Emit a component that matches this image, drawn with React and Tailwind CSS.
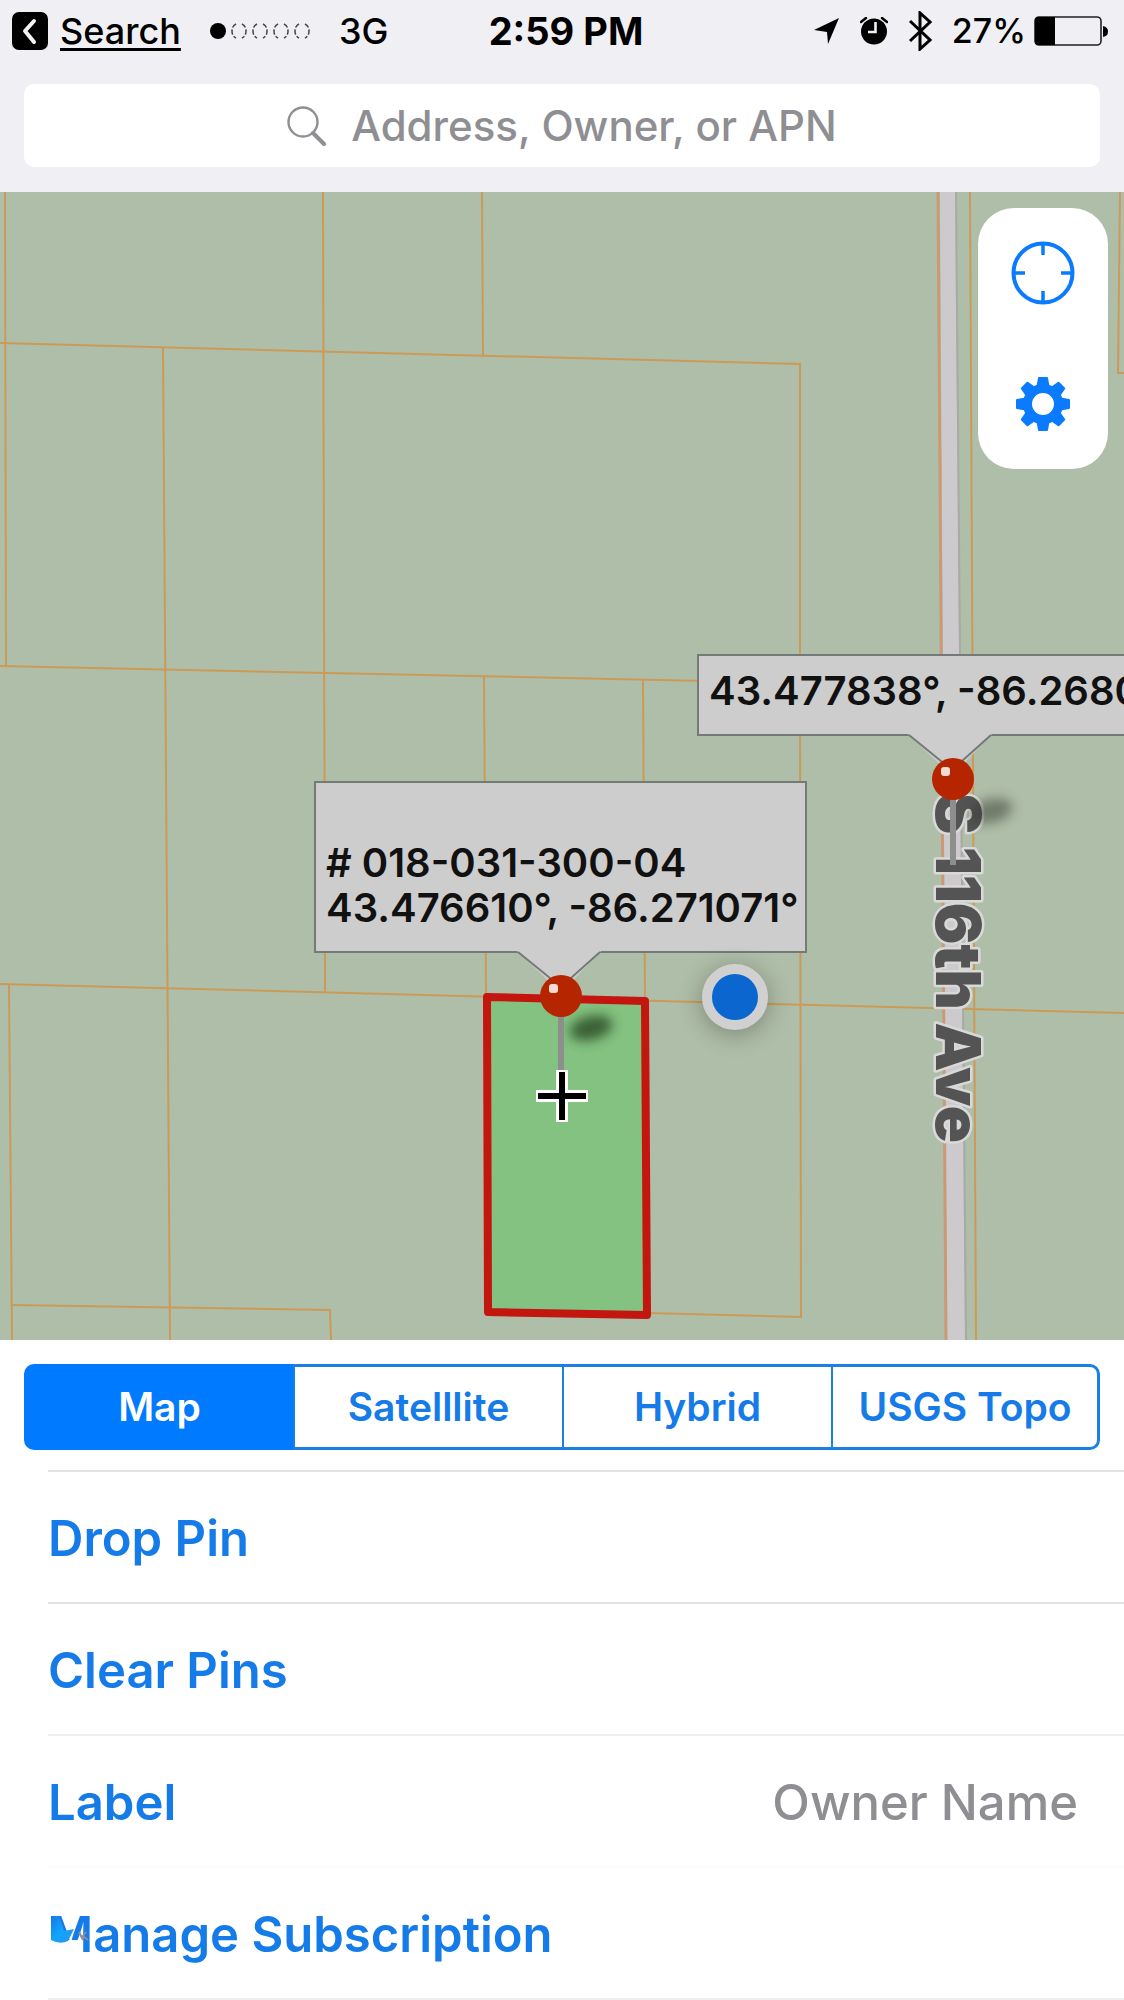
import { useState } from "react";

const INK = "#0a7aff";

function BackIcon() {
  return (
    <svg viewBox="0 0 36 38" className="h-[38px] w-9" aria-hidden="true">
      <rect width="36" height="38" rx="7" fill="#000" />
      <path d="M22 9 L13 19 L22 30" fill="none" stroke="#f4f4f7" strokeWidth="4" strokeLinecap="round" strokeLinejoin="round" />
    </svg>
  );
}

function SignalDots() {
  return (
    <svg viewBox="0 0 102 20" className="h-5 w-[102px]" role="img" aria-label="Signal: 1 of 5">
      <circle cx="9" cy="10" r="8" fill="#000" />
      {[30, 51, 72, 93].map((cx) => (
        <g key={cx} fill="none" stroke="#444" strokeWidth="1.5">
          <path d={`M${cx - 3} 3 Q${cx - 7} 5 ${cx - 7} 10 T${cx - 3} 17`} strokeDasharray="5 2" />
          <path d={`M${cx + 3} 3 Q${cx + 7} 5 ${cx + 7} 10 T${cx + 3} 17`} strokeDasharray="5 2" />
        </g>
      ))}
    </svg>
  );
}

function LocationIcon() {
  return (
    <svg viewBox="0 0 26 28" className="h-7 w-[26px]" aria-hidden="true">
      <path d="M25 1 L14 27 L13 15 L0 13 Z" fill="#000" />
    </svg>
  );
}

function AlarmIcon() {
  return (
    <svg viewBox="0 0 28 28" className="h-7 w-7" aria-hidden="true">
      <circle cx="14" cy="14.500" r="13" fill="#000" />
      <path d="M1 5 L6 1 M27 5 L22 1" stroke="#000" strokeWidth="2.4" strokeLinecap="round" />
      <path d="M15.500 5 V15 H8" fill="none" stroke="#efeff4" strokeWidth="2.6" />
    </svg>
  );
}

function BluetoothIcon() {
  return (
    <svg viewBox="0 0 24 40" className="h-10 w-6" aria-hidden="true">
      <path d="M2 10 L22 29 L12 38 V2 L22 11 L2 30" fill="none" stroke="#000" strokeWidth="3" />
    </svg>
  );
}

function BatteryIcon() {
  return (
    <svg viewBox="0 0 74 30" className="h-[30px] w-[74px]" aria-hidden="true">
      <rect x="1" y="1" width="66" height="28" rx="4" fill="none" stroke="#222" strokeWidth="1.6" />
      <path d="M4 1 H21 V29 H4 Q1 29 1 25 V5 Q1 1 4 1 Z" fill="#000" />
      <path d="M69 10 Q74 11 74 15.500 Q74 20 69 21 Z" fill="#000" />
    </svg>
  );
}

function StatusBar() {
  return (
    <div className="grid h-[62px] grid-cols-[1fr_auto_1fr] items-center pr-4 pl-3 text-[36px] leading-[44px] font-medium text-black">
      <div className="flex items-center">
        <a href="#search" className="flex items-center gap-3">
          <BackIcon />
          <span className="underline decoration-3 underline-offset-4 [text-decoration-skip-ink:none]">Search</span>
        </a>
        <span className="ml-7 flex"><SignalDots /></span>
        <span className="ml-7">3G</span>
      </div>
      <div className="pl-3 text-[38px] font-bold">2:59 PM</div>
      <div className="flex items-center justify-end gap-5">
        <LocationIcon />
        <AlarmIcon />
        <BluetoothIcon />
        <div className="flex items-center gap-2">
          <span className="text-[34px]">27%</span>
          <BatteryIcon />
        </div>
      </div>
    </div>
  );
}

function SearchBar() {
  return (
    <div className="px-6 pt-[22px] pb-[25px]">
      <label className="flex h-[83px] items-center justify-center gap-6 rounded-[10px] bg-white">
        <svg viewBox="0 0 40 40" className="size-10" aria-hidden="true">
          <circle cx="16" cy="16" r="14.500" fill="none" stroke="#8e8e93" strokeWidth="2.4" />
          <path d="M26 27 L37 38" stroke="#8e8e93" strokeWidth="4" strokeLinecap="round" />
        </svg>
        <input
          type="text"
          aria-label="Search parcels"
          placeholder="Address, Owner, or APN"
          className="field-sizing-content bg-transparent text-[42px] leading-[50px] font-medium text-black outline-none placeholder:text-[#8e8e93]"
        />
      </label>
    </div>
  );
}

const parcelLines = [
  "M0 151 L800 172 V489 L801 1125 L648 1121",
  "M5 0 L6 475",
  "M163 155 L170 1148",
  "M323 0 L325 801",
  "M482 0 L483 164",
  "M0 474 L800 491",
  "M484 484 L486 805",
  "M643 488 L645 808",
  "M0 792 L1124 821",
  "M9 793 L12 1148",
  "M12 1113 L330 1118 L331 1148",
  "M1120 0 L1118 181 H1124",
  "M970 0 L976 1148",
];

function MapCanvas() {
  return (
    <svg viewBox="0 0 1124 1148" className="absolute inset-0 h-full w-full" preserveAspectRatio="xMidYMid slice" aria-hidden="true">
      <defs>
        <filter id="soft" x="-50%" y="-80%" width="200%" height="260%">
          <feGaussianBlur stdDeviation="6" />
        </filter>
      </defs>
      <rect width="1124" height="1148" fill="#afbea8" />
      <g fill="none" stroke="#cc9a57" strokeWidth="2">
        {parcelLines.map((d) => <path key={d} d={d} />)}
      </g>
      <path d="M940 0 L955 0 L965 1148 L947 1148 Z" fill="#cdcacd" />
      <path d="M938 0 L946 1148" stroke="#cb9a75" strokeWidth="3" />
      <path d="M956 0 L966 1148" stroke="#aaa9a6" strokeWidth="2" />
      <path d="M487 805 L645 809 L647 1123 L488 1120 Z" fill="#84c281" stroke="#c2160f" strokeWidth="8" strokeLinejoin="round" />
      <text
        transform="translate(936 601) rotate(90)"
        fontSize="62"
        fontWeight="900"
        fill="#545454"
        stroke="#d9d9d9"
        strokeWidth="5"
        strokeLinejoin="round"
        paintOrder="stroke"
      >
        S 116th Ave
      </text>
      <ellipse cx="591" cy="836" rx="22" ry="12" transform="rotate(-14 591 836)" fill="#20401f" opacity="0.75" filter="url(#soft)" />
      <ellipse cx="991" cy="619" rx="22" ry="12" transform="rotate(-14 991 619)" fill="#30382e" opacity="0.5" filter="url(#soft)" />
    </svg>
  );
}

function Pin({ className }) {
  return (
    <svg viewBox="0 0 44 112" className={className} aria-hidden="true">
      <rect x="19" y="38" width="6" height="70" fill="#8d8f8d" />
      <circle cx="22" cy="22" r="21" fill="#b52500" />
      <rect x="10" y="10" width="9" height="9" rx="3" fill="#f3dcd6" />
    </svg>
  );
}

function Pointer({ className }) {
  return (
    <svg viewBox="0 0 84 50" className={className} aria-hidden="true">
      <path d="M0 0 H84 L44 42 Z" fill="#cdcdcd" />
      <path d="M1 1 L44 36 L83 1" fill="none" stroke="#747b76" strokeWidth="2" />
      <path d="M3 0 H81 L44 34 Z" fill="#cdcdcd" />
    </svg>
  );
}

function MapTools() {
  return (
    <div className="absolute top-4 right-4 flex h-[261px] w-[130px] flex-col justify-around rounded-[36px] bg-white">
      <button type="button" aria-label="Locate me" className="flex h-[130px] items-center justify-center">
        <svg viewBox="0 0 64 64" className="size-16" fill="none" stroke={INK}>
          <circle cx="32" cy="32" r="29.500" strokeWidth="4" />
          <path d="M32 3 V14 M32 50 V61 M3 32 H14 M50 32 H61" strokeWidth="3.500" />
        </svg>
      </button>
      <button type="button" aria-label="Settings" className="flex h-[130px] items-center justify-center">
        <svg viewBox="-28 -28 56 56" className="size-14" fill={INK}>
          {[0, 45, 90, 135, 180, 225, 270, 315].map((a) => (
            <path key={a} d="M-7 -15 L-5 -26 Q-5 -27 -4 -27 H4 Q5 -27 5 -26 L7 -15 Z" transform={`rotate(${a})`} />
          ))}
          <circle r="15.500" fill="none" stroke={INK} strokeWidth="9" />
        </svg>
      </button>
    </div>
  );
}

function MapView() {
  return (
    <section aria-label="Parcel map" className="relative h-[1148px] overflow-hidden">
      <MapCanvas />

      <div className="absolute top-[462px] left-[697px] w-[514px] border-2 border-[#747b76] bg-[#cdcdcd] px-[10px] pt-3 pb-[21px] text-[40px] leading-[45px] font-semibold whitespace-nowrap text-[#111]">
        43.477838°, -86.2680
        <Pointer className="absolute top-full left-[209px] h-[50px] w-[84px]" />
      </div>
      <Pin className="absolute top-[565px] left-[931px] h-[112px] w-11" />

      <div className="absolute top-[589px] left-[314px] w-[493px] border-2 border-[#747b76] bg-[#cdcdcd] px-[10px] pt-[57px] pb-[21px] text-[40px] leading-[45px] font-semibold whitespace-nowrap text-[#111]">
        <div># 018-031-300-04</div>
        <div>43.476610°, -86.271071°</div>
        <Pointer className="absolute top-full left-[201px] h-[50px] w-[84px]" />
      </div>
      <Pin className="absolute top-[782px] left-[539px] h-[112px] w-11" />

      <div className="absolute top-[772px] left-[702px] size-[66px] rounded-full border-[10px] border-[#d0d0d0] bg-[#0b66cf] shadow-[0_4px_24px_rgba(0,0,0,0.3)]" />

      <svg viewBox="0 0 56 56" className="absolute top-[876px] left-[534px] size-14" aria-hidden="true">
        <path d="M28 2 V54 M2 28 H54" stroke="#fff" strokeWidth="12" />
        <path d="M28 4 V52 M4 28 H52" stroke="#000" strokeWidth="6" />
      </svg>

      <MapTools />
    </section>
  );
}

function LayerPicker() {
  const [layer, setLayer] = useState("Map");
  return (
    <div className="px-6 pt-6 pb-5">
      <div role="group" aria-label="Map layer" className="grid h-[86px] grid-cols-4">
        {["Map", "Satelllite", "Hybrid", "USGS Topo"].map((name) => (
          <button
            key={name}
            type="button"
            aria-pressed={layer === name}
            onClick={() => setLayer(name)}
            className="border-y-[3px] border-l-2 border-[#1b80e6] text-[39px] leading-[46px] font-semibold whitespace-nowrap text-[#147be8] first:rounded-l-[10px] last:rounded-r-[10px] last:border-r-[3px] aria-pressed:border-[#007aff] aria-pressed:bg-[#007aff] aria-pressed:text-white"
          >
            {name}
          </button>
        ))}
      </div>
    </div>
  );
}

function MenuRow({ label, value, line, children }) {
  return (
    <li className={`relative ml-12 border-t-2 ${line}`}>
      <button type="button" className="flex h-[130px] w-full items-center justify-between pt-1 pr-[46px] text-left text-[49px] leading-[60px]">
        <span className="font-semibold text-[#147be8]">{label}</span>
        {value && <span className="font-medium text-[#8e8e93]">{value}</span>}
      </button>
      {children}
    </li>
  );
}

function Smudge() {
  return (
    <svg viewBox="0 0 44 44" className="pointer-events-none absolute top-11 left-0 size-11" aria-hidden="true">
      <defs>
        <linearGradient id="smudge" x1="0" y1="0" x2="1" y2="1">
          <stop offset="0" stopColor="#1478e6" />
          <stop offset="0.5" stopColor="#12a5fb" />
          <stop offset="1" stopColor="#2f8ff0" />
        </linearGradient>
      </defs>
      <path d="M0 28 H31 V44 H0 Z" fill="#fff" />
      <path d="M3 4 H11 L16 19 L26 17 L20 29 Q12 33 3 28 Z" fill="url(#smudge)" />
      <path d="M31 20 L35 28 M38 20 L35 24 L40 28" fill="none" stroke="#8b8f94" strokeWidth="2" />
    </svg>
  );
}

export default function App() {
  return (
    <main className="min-h-screen overflow-hidden bg-white font-[Inter,'Liberation_Sans',sans-serif]">
      <header className="bg-[#efeff4]">
        <StatusBar />
        <SearchBar />
      </header>
      <MapView />
      <LayerPicker />
      <ul>
        <MenuRow label="Drop Pin" line="border-[#e2e2e2]" />
        <MenuRow label="Clear Pins" line="border-[#e2e2e2]" />
        <MenuRow label="Label" value="Owner Name" line="border-[#eeeeee]" />
        <MenuRow label="Manage Subscription" line="border-[#fcfcfc]">
          <Smudge />
        </MenuRow>
        <li className="ml-12 border-t-2 border-[#eeeeee]" aria-hidden="true" />
      </ul>
    </main>
  );
}
